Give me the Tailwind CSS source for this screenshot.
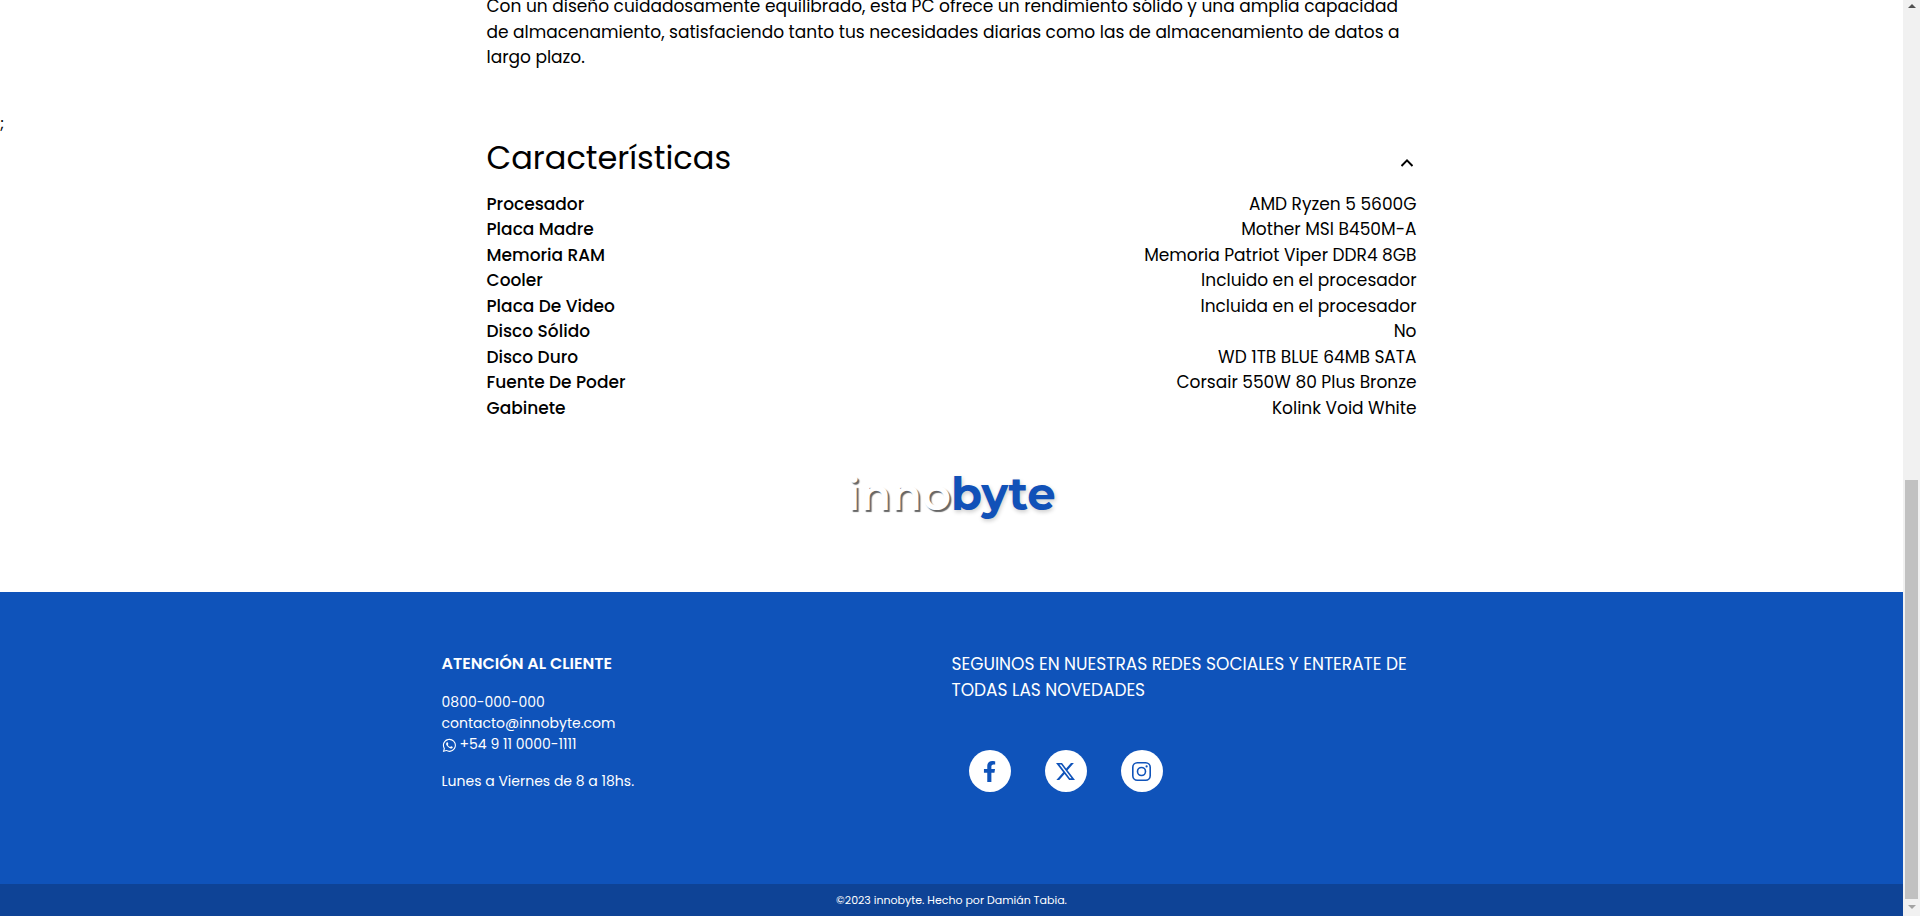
<!DOCTYPE html>
<html lang="es">
<head>
<meta charset="utf-8">
<meta name="viewport" content="width=device-width, initial-scale=1">
<title>innobyte</title>
<script src="https://cdn.jsdelivr.net/npm/@tailwindcss/browser@4"></script>
</head>
<body class="flex h-screen overflow-hidden bg-white font-['Poppins','Inter',sans-serif] text-black">
<div class="flex min-w-0 flex-1 flex-col justify-end overflow-hidden">
  <main>
    <p class="mx-auto w-full max-w-[930px] text-[17px] leading-normal">Con un diseño cuidadosamente equilibrado, esta PC ofrece un rendimiento sólido y una amplia capacidad<br>de almacenamiento, satisfaciendo tanto tus necesidades diarias como las de almacenamiento de datos a<br>largo plazo.</p>
    <div class="mt-[41px] text-base leading-6">;</div>
    <section class="mx-auto w-full max-w-[930px]">
      <div class="flex items-center justify-between">
        <h2 class="text-[32px] leading-[43px]">Características</h2>
        <button type="button" aria-label="Contraer características" aria-expanded="true" class="px-1 pt-3">
          <svg class="size-3" viewBox="0 0 12 12" fill="none" stroke="currentColor" stroke-width="2"><path d="M0.5 9 6 3.4 11.5 9"/></svg>
        </button>
      </div>
      <table class="mt-[13px] w-full text-[17px] leading-normal">
        <tbody>
          <tr><th scope="row" class="p-0 text-left font-medium">Procesador</th><td class="p-0 text-right">AMD Ryzen 5 5600G</td></tr>
          <tr><th scope="row" class="p-0 text-left font-medium">Placa Madre</th><td class="p-0 text-right">Mother MSI B450M-A</td></tr>
          <tr><th scope="row" class="p-0 text-left font-medium">Memoria RAM</th><td class="p-0 text-right">Memoria Patriot Viper DDR4 8GB</td></tr>
          <tr><th scope="row" class="p-0 text-left font-medium">Cooler</th><td class="p-0 text-right">Incluido en el procesador</td></tr>
          <tr><th scope="row" class="p-0 text-left font-medium">Placa De Video</th><td class="p-0 text-right">Incluida en el procesador</td></tr>
          <tr><th scope="row" class="p-0 text-left font-medium">Disco Sólido</th><td class="p-0 text-right">No</td></tr>
          <tr><th scope="row" class="p-0 text-left font-medium">Disco Duro</th><td class="p-0 text-right">WD 1TB BLUE 64MB SATA</td></tr>
          <tr><th scope="row" class="p-0 text-left font-medium">Fuente De Poder</th><td class="p-0 text-right">Corsair 550W 80 Plus Bronze</td></tr>
          <tr><th scope="row" class="p-0 text-left font-medium">Gabinete</th><td class="p-0 text-right">Kolink Void White</td></tr>
        </tbody>
      </table>
    </section>
    <div class="mt-[39px] mb-16 flex justify-center font-['Montserrat','Poppins',sans-serif] text-[45px] leading-17">
      <span class="font-semibold text-white [text-shadow:2px_2px_1px_#666]">inno</span><span class="font-bold text-[#1151b8] [text-shadow:1px_2px_4px_#0003]">byte</span>
    </div>
  </main>
  <footer class="bg-[#0f53ba] text-white">
    <div class="mx-auto grid h-[292px] w-full max-w-[1020px] grid-cols-2 pt-[59px]">
      <div class="text-sm leading-[21px]">
        <h3 class="text-base leading-[26px] font-semibold">ATENCIÓN AL CLIENTE</h3>
        <p class="mt-[15px]">0800-000-000</p>
        <p><a href="mailto:contacto@innobyte.com">contacto@innobyte.com</a></p>
        <p class="flex items-center gap-1"><svg class="size-3.5" viewBox="-1 -1 17 17" fill="currentColor"><path d="M13.601 2.326A7.85 7.85 0 0 0 7.994 0C3.627 0 .068 3.558.064 7.926c0 1.399.366 2.76 1.057 3.965L0 16l4.204-1.102a7.9 7.9 0 0 0 3.79.965h.004c4.368 0 7.926-3.558 7.93-7.93A7.9 7.9 0 0 0 13.6 2.326zM7.994 14.521a6.6 6.6 0 0 1-3.356-.92l-.24-.144-2.494.654.666-2.433-.156-.251a6.56 6.56 0 0 1-1.007-3.505c0-3.626 2.957-6.584 6.591-6.584a6.56 6.56 0 0 1 4.66 1.931 6.56 6.56 0 0 1 1.928 4.66c-.004 3.639-2.961 6.592-6.592 6.592m3.615-4.934c-.197-.099-1.17-.578-1.353-.646-.182-.065-.315-.099-.445.099-.133.197-.513.646-.627.775-.114.133-.232.148-.43.05-.197-.1-.836-.308-1.592-.985-.59-.525-.985-1.175-1.103-1.372-.114-.198-.011-.304.088-.403.087-.088.197-.232.296-.346.1-.114.133-.198.198-.33.065-.134.034-.248-.015-.347-.05-.099-.445-1.076-.612-1.47-.16-.389-.323-.335-.445-.34-.114-.007-.247-.007-.38-.007a.73.73 0 0 0-.529.247c-.182.198-.691.677-.691 1.654s.71 1.916.81 2.049c.098.133 1.394 2.132 3.383 2.992.47.205.84.326 1.129.418.475.152.904.129 1.246.08.38-.058 1.171-.48 1.338-.943.164-.464.164-.86.114-.943-.049-.084-.182-.133-.38-.232"/></svg>+54 9 11 0000-1111</p>
        <p class="mt-4">Lunes a Viernes de 8 a 18hs.</p>
      </div>
      <div class="pt-px">
        <p class="text-[17px] leading-normal">SEGUINOS EN NUESTRAS REDES SOCIALES Y ENTERATE DE<br>TODAS LAS NOVEDADES</p>
        <div class="mt-[47px] ml-[17px] flex gap-[34px] text-[#0f53ba]">
          <a href="#" aria-label="Facebook" class="flex size-[42px] items-center justify-center rounded-full bg-white"><svg class="h-[21px]" viewBox="0 0 320 512" fill="currentColor"><path d="M279.14 288l14.22-92.66h-88.91v-60.13c0-25.35 12.42-50.06 52.24-50.06h40.42V6.26S260.43 0 225.36 0c-73.22 0-121.08 44.38-121.08 124.72v70.62H22.89V288h81.39v224h100.17V288z"/></svg></a>
          <a href="#" aria-label="X" class="flex size-[42px] items-center justify-center rounded-full bg-white"><svg class="size-[19px]" viewBox="0 0 16 16" fill="currentColor"><path d="M12.6.75h2.454l-5.36 6.142L16 15.25h-4.937l-3.867-5.07-4.425 5.07H.316l5.733-6.57L0 .75h5.063l3.495 4.633L12.601.75Zm-.86 13.028h1.36L4.323 2.145H2.865z"/></svg></a>
          <a href="#" aria-label="Instagram" class="flex size-[42px] items-center justify-center rounded-full bg-white"><svg class="size-[19px]" viewBox="0 0 19 19" fill="none" stroke="currentColor" stroke-width="1.6"><rect x=".8" y=".8" width="17.4" height="17.4" rx="4.5"/><circle cx="9.5" cy="9.5" r="4"/><circle cx="14.6" cy="4.4" r="1.1" fill="currentColor" stroke="none"/></svg></a>
        </div>
      </div>
    </div>
    <div class="bg-[#0e4396] text-center text-[11px] leading-8">©2023 innobyte. Hecho por Damián Tabia.</div>
  </footer>
</div>
<div aria-hidden="true" class="flex w-[17px] flex-col items-center bg-[#f1f1f1]">
  <svg class="h-5 w-2" viewBox="0 0 8 20"><path d="M0 8 4 4 8 8z" fill="#505050"/></svg>
  <div class="mt-[460px] w-[13px] flex-1 bg-[#c1c1c1]"></div>
  <svg class="h-[17px] w-2" viewBox="0 0 8 17"><path d="M0 6 4 10 8 6z" fill="#a3a3a3"/></svg>
</div>
</body>
</html>
